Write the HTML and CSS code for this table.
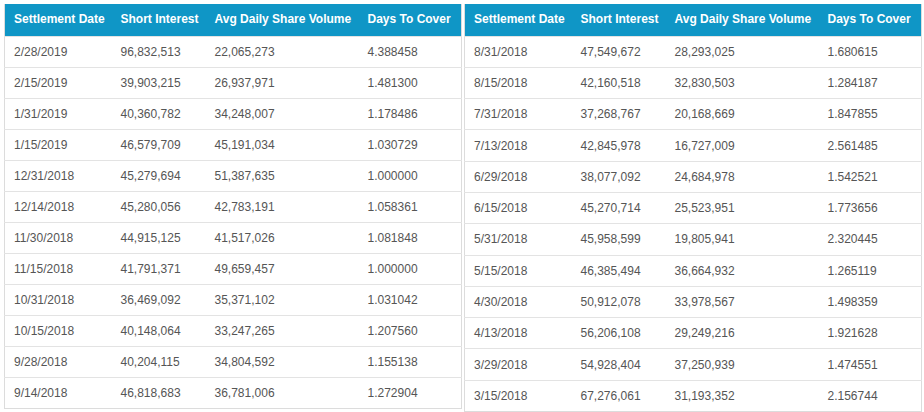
FILE: index.html
```html
<!DOCTYPE html>
<html>
<head>
<meta charset="utf-8">
<link rel="stylesheet" href="styles.css">
</head>
<body>
<div class="wrap">
<table class="si">
<thead><tr><th>Settlement Date</th><th>Short Interest</th><th>Avg Daily Share Volume</th><th>Days To Cover</th></tr></thead>
<tbody>
<tr><td>2/28/2019</td><td>96,832,513</td><td>22,065,273</td><td>4.388458</td></tr>
<tr><td>2/15/2019</td><td>39,903,215</td><td>26,937,971</td><td>1.481300</td></tr>
<tr><td>1/31/2019</td><td>40,360,782</td><td>34,248,007</td><td>1.178486</td></tr>
<tr><td>1/15/2019</td><td>46,579,709</td><td>45,191,034</td><td>1.030729</td></tr>
<tr><td>12/31/2018</td><td>45,279,694</td><td>51,387,635</td><td>1.000000</td></tr>
<tr><td>12/14/2018</td><td>45,280,056</td><td>42,783,191</td><td>1.058361</td></tr>
<tr><td>11/30/2018</td><td>44,915,125</td><td>41,517,026</td><td>1.081848</td></tr>
<tr><td>11/15/2018</td><td>41,791,371</td><td>49,659,457</td><td>1.000000</td></tr>
<tr><td>10/31/2018</td><td>36,469,092</td><td>35,371,102</td><td>1.031042</td></tr>
<tr><td>10/15/2018</td><td>40,148,064</td><td>33,247,265</td><td>1.207560</td></tr>
<tr><td>9/28/2018</td><td>40,204,115</td><td>34,804,592</td><td>1.155138</td></tr>
<tr><td>9/14/2018</td><td>46,818,683</td><td>36,781,006</td><td>1.272904</td></tr>
</tbody>
</table>
<table class="si right">
<thead><tr><th>Settlement Date</th><th>Short Interest</th><th>Avg Daily Share Volume</th><th>Days To Cover</th></tr></thead>
<tbody>
<tr><td>8/31/2018</td><td>47,549,672</td><td>28,293,025</td><td>1.680615</td></tr>
<tr><td>8/15/2018</td><td>42,160,518</td><td>32,830,503</td><td>1.284187</td></tr>
<tr><td>7/31/2018</td><td>37,268,767</td><td>20,168,669</td><td>1.847855</td></tr>
<tr><td>7/13/2018</td><td>42,845,978</td><td>16,727,009</td><td>2.561485</td></tr>
<tr><td>6/29/2018</td><td>38,077,092</td><td>24,684,978</td><td>1.542521</td></tr>
<tr><td>6/15/2018</td><td>45,270,714</td><td>25,523,951</td><td>1.773656</td></tr>
<tr><td>5/31/2018</td><td>45,958,599</td><td>19,805,941</td><td>2.320445</td></tr>
<tr><td>5/15/2018</td><td>46,385,494</td><td>36,664,932</td><td>1.265119</td></tr>
<tr><td>4/30/2018</td><td>50,912,078</td><td>33,978,567</td><td>1.498359</td></tr>
<tr><td>4/13/2018</td><td>56,206,108</td><td>29,249,216</td><td>1.921628</td></tr>
<tr><td>3/29/2018</td><td>54,928,404</td><td>37,250,939</td><td>1.474551</td></tr>
<tr><td>3/15/2018</td><td>67,276,061</td><td>31,193,352</td><td>2.156744</td></tr>
</tbody>
</table>
</div>
</body>
</html>
```
FILE: styles.css
```css
html, body {
  margin: 0;
  padding: 0;
  background: #fff;
}
.wrap {
  display: flex;
  gap: 2px;
  padding: 4px 4px 0 4px;
  align-items: flex-start;
}
.si {
  width: 457px;
  border-collapse: collapse;
  table-layout: fixed;
  font-family: "Liberation Sans", Arial, sans-serif;
  font-size: 12px;
  border: 1px solid #dcdcdc;
  border-top: none;
}
.si th, .si td { box-sizing: border-box; }
.si th:nth-child(1) { width: 107px; }
.si th:nth-child(2) { width: 94px; }
.si th:nth-child(3) { width: 153px; }
.si th:nth-child(4) { width: 103px; }
.si th {
  background: #0f96c6;
  color: #fff;
  font-weight: bold;
  text-align: left;
  height: 32px;
  padding: 0 0 1px 9px;
  white-space: nowrap;
  overflow: hidden;
}
.si td {
  color: #555;
  height: 31px;
  padding: 0 0 0 9px;
  border-top: 1px solid #e3e3e3;
  white-space: nowrap;
}
.right td { height: 31.3px; }
```
